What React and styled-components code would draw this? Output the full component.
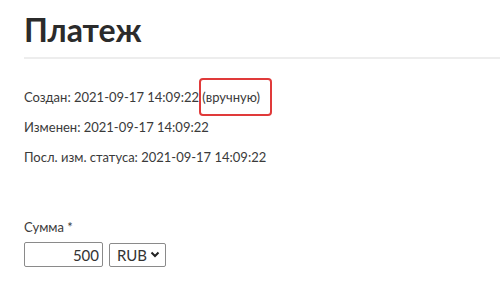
import React from "react";
import styled, { createGlobalStyle } from "styled-components";

const Global = createGlobalStyle`
  body {
    margin: 0;
    background: #fff;
    font-family: Lato, "Open Sans", sans-serif;
    color: #333;
  }
`;

const Page = styled.div`
  padding: 10px 0 0 24px;
`;

const Title = styled.h1`
  margin: 0;
  font-size: 32px;
  font-weight: 700;
  color: #2b2b2b;
  line-height: 40px;
`;

const Divider = styled.hr`
  margin: 7px 0 0;
  border: 0;
  border-top: 2px solid #ededed;
`;

const Meta = styled.div`
  margin-top: 30px;
  display: flex;
  flex-direction: column;
  gap: 13px;
`;

const MetaRow = styled.div`
  font-size: 13px;
  line-height: 17px;
  color: #3a3a3a;
`;

const Marked = styled.span`
  position: relative;

  &::after {
    content: "";
    position: absolute;
    left: -3px;
    right: -12px;
    top: -11px;
    bottom: -11px;
    border: 2px solid #e03a3a;
    border-radius: 4px;
  }
`;

const Field = styled.div`
  margin-top: 53px;
`;

const Label = styled.div`
  font-size: 13px;
  line-height: 17px;
  color: #3a3a3a;
  margin-bottom: 6px;
`;

const Controls = styled.div`
  display: flex;
  gap: 6px;
  align-items: center;
`;

const AmountInput = styled.input`
  box-sizing: border-box;
  width: 79px;
  height: 25px;
  border: 1px solid #8a8a8a;
  border-radius: 2px;
  padding: 0 3px;
  font-family: inherit;
  font-size: 15px;
  color: #333;
  text-align: right;
`;

const Select = styled.div`
  box-sizing: border-box;
  width: 57px;
  height: 24px;
  border: 1px solid #8a8a8a;
  border-radius: 2px;
  display: flex;
  align-items: center;
  justify-content: space-between;
  padding: 0 5px 0 7px;
  font-size: 15px;
  color: #333;
`;

export default function App() {
  return (
    <Page>
      <Global />
      <Title>Платеж</Title>
      <Divider />
      <Meta>
        <MetaRow>
          Создан: 2021-09-17 14:09:22 <Marked>(вручную)</Marked>
        </MetaRow>
        <MetaRow>Изменен: 2021-09-17 14:09:22</MetaRow>
        <MetaRow>Посл. изм. статуса: 2021-09-17 14:09:22</MetaRow>
      </Meta>
      <Field>
        <Label>Сумма *</Label>
        <Controls>
          <AmountInput defaultValue="500" />
          <Select>
            RUB
            <svg width="10" height="7" viewBox="0 0 10 7">
              <path d="M1.5 1.5 L5 5 L8.5 1.5" fill="none" stroke="#222" strokeWidth="2" />
            </svg>
          </Select>
        </Controls>
      </Field>
    </Page>
  );
}
